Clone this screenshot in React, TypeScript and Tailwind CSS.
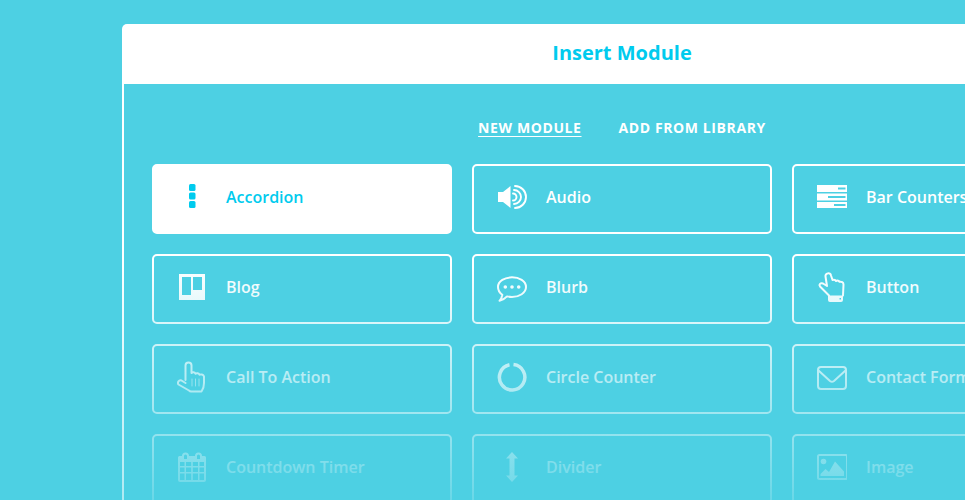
import React from 'react';

const icons: Record<string, React.ReactNode> = {
  accordion: (
    <g fill="currentColor">
      <rect x="12" y="3" width="6.5" height="7" rx="1.5" />
      <rect x="12" y="11.5" width="6.5" height="7" rx="1.5" />
      <rect x="12" y="20" width="6.5" height="7" rx="1.5" />
    </g>
  ),
  audio: (
    <g>
      <path fill="currentColor" d="M1 11h5l7.5-6v22L6 21H1z" />
      <g fill="none" stroke="currentColor" strokeWidth="1.9" strokeLinecap="round">
        <path d="M16 12.500a3.500 3.500 0 0 1 0 7" />
        <path d="M17 9a7 7 0 0 1 0 14" />
        <path d="M18 5a11 11 0 0 1 0 22" />
      </g>
    </g>
  ),
  bars: (
    <path
      fill="currentColor"
      fillRule="evenodd"
      d="M0 4h30v7H0zM21 6.500v2h7.500v-2zM0 12.500h30v7H0zM11 15v2h17.500v-2zM0 21h30v6H0zM17 23v2h11.500v-2z"
    />
  ),
  blog: (
    <path
      fill="currentColor"
      fillRule="evenodd"
      d="M2 3h26v26H2zM5 6v18h9V6zM16 6v13h9V6z"
    />
  ),
  pointer: (
    <g fill="none" stroke="currentColor" strokeWidth="2" strokeLinejoin="round" strokeLinecap="round">
      <path d="M8.500 19V4.500a3 3 0 0 1 6 0V12c1-1.200 3.500-1 4 .8 1-1 3.500-.7 4 1 1-.7 4-.5 4.500 1.700L27 22c0 2.500-1 6.500-2.500 8.500H14c-1 0-1.500-.5-2-1L1.500 23.500c-1.500-2 .5-5 3-4L8.500 22" />
      <path strokeWidth="1" opacity="0.7" d="M15 18v7M18.500 18v7M22 18v7" />
    </g>
  ),
  button: (
    <g>
      <path
        fill="none"
        stroke="currentColor"
        strokeWidth="2"
        strokeLinejoin="round"
        strokeLinecap="round"
        d="M12 24.500 3 15.500c-1.500-2 .5-4 3-3l4 2.500L8.500 5.500c-.5-3.500 5-4.500 5.500-1L15.500 9c1.500-.5 3 0 3.500 1 1.500-.8 3-.3 3.500.8 2-.5 4 .5 4 2.700L26 24.500"
      />
      <path
        fill="currentColor"
        fillRule="evenodd"
        d="M11 24.500h15V29a2 2 0 0 1-2 2H13a2 2 0 0 1-2-2zM22.500 27v1.500H24V27z"
      />
    </g>
  ),
  blurb: (
    <g>
      <path
        fill="none"
        stroke="currentColor"
        strokeWidth="2"
        strokeLinejoin="round"
        d="M15 6.300c7.200 0 14 3.800 14 9.700s-6.800 10-14 10c-1.800 0-3.500-.2-5-.6-2 2.200-4.500 3.600-7.500 4.400 1.500-1.800 2.500-3.500 2.800-6C2.800 22 1 19.200 1 16 1 10.100 7.800 6.300 15 6.300z"
      />
      <circle cx="8.300" cy="16" r="1.800" fill="currentColor" />
      <circle cx="15" cy="16" r="1.800" fill="currentColor" />
      <circle cx="21.700" cy="16" r="1.800" fill="currentColor" />
    </g>
  ),
  ring: (
    <path
      fill="none"
      stroke="currentColor"
      strokeWidth="3.500"
      d="M16.500 3.600A12.700 12.700 0 1 1 12.500 3.800"
    />
  ),
  mail: (
    <g fill="none" stroke="currentColor" strokeWidth="2" strokeLinejoin="round">
      <rect x="1" y="6" width="28" height="22" rx="3" />
      <path d="M1.500 9.500 13 20c1.200 1 2.800 1 4 0L28.500 9.500" />
    </g>
  ),
  calendar: (
    <path
      fill="currentColor"
      fillRule="evenodd"
      d="M1 6.500A1.500 1.500 0 0 1 2.500 5H5a3.500 3.500 0 0 1 7 0h6a3.500 3.500 0 0 1 7 0h2.500A1.500 1.500 0 0 1 29 6.500V29a2 2 0 0 1-2 2H3a2 2 0 0 1-2-2zM3 11v4h4.500v-4zM9 11v4h5.200v-4zM15.800 11v4H21v-4zM22.500 11v4H27v-4zM3 16.500V21h4.500v-4.500zM9 16.500V21h5.200v-4.500zM15.800 16.500V21H21v-4.500zM22.500 16.500V21H27v-4.500zM3 22.500V29h4.500v-6.500zM9 22.500V29h5.200v-6.500zM15.800 22.500V29H21v-6.500zM22.500 22.500V29H27v-6.500zM7 5v3h3V5a1.500 1.500 0 0 0-3 0zM20 5v3h3V5a1.500 1.500 0 0 0-3 0z"
    />
  ),
  divider: <path fill="currentColor" d="M15 1l6 6.500h-3.500v17H21L15 31l-6-6.500h3.500v-17H9z" />,
  image: (
    <g>
      <rect x="1" y="4" width="29" height="24" rx="1.500" fill="none" stroke="currentColor" strokeWidth="2" />
      <circle cx="6.500" cy="10.500" r="2.800" fill="currentColor" />
      <path fill="currentColor" d="M3.500 25v-2l5-5 3.500 3 6-10.500 9 10V25z" />
    </g>
  ),
};

const modules = [
  { name: 'Accordion', icon: 'accordion', active: true },
  { name: 'Audio', icon: 'audio' },
  { name: 'Bar Counters', icon: 'bars' },
  { name: 'Blog', icon: 'blog' },
  { name: 'Blurb', icon: 'blurb' },
  { name: 'Button', icon: 'button' },
  { name: 'Call To Action', icon: 'pointer' },
  { name: 'Circle Counter', icon: 'ring' },
  { name: 'Contact Form', icon: 'mail' },
  { name: 'Countdown Timer', icon: 'calendar' },
  { name: 'Divider', icon: 'divider' },
  { name: 'Image', icon: 'image' },
];

const ModuleCard: React.FC<{ name: string; icon: string; active?: boolean }> = ({ name, icon, active }) => {
  return (
    <div
      className={`flex items-center gap-[19px] h-[70px] pl-[23px] pb-[4px] rounded-[5px] border-2 border-white text-[16px] font-semibold whitespace-nowrap ${
        active ? 'bg-white text-[#00cbee]' : 'text-white'
      }`}
    >
      <svg width="30" height="32" viewBox="0 0 30 32" className="shrink-0">
        {icons[icon]}
      </svg>
      <span>{name}</span>
    </div>
  );
};

export default function App() {
  return (
    <div className="relative w-[965px] h-[500px] overflow-hidden bg-[#4dd0e3] pt-[24px] pl-[122px] font-['Open_Sans',sans-serif]">
      <div className="w-[1000px]">
        <div className="h-[60px] pb-[2px] flex items-center justify-center bg-white rounded-tl-[5px] text-[20px] font-bold text-[#00cbee]">
          Insert Module
        </div>
        <div className="border-l-2 border-white px-[28px] pt-[34px] h-[500px]">
          <div className="flex justify-center gap-[37px] mr-[2px] mb-[26px] text-[14px] leading-[20px] font-bold tracking-[0.6px] uppercase text-white">
            <span className="underline underline-offset-[3px]">New Module</span>
            <span>Add From Library</span>
          </div>
          <div className="grid grid-cols-[300px_300px_300px] gap-[20px]">
            {modules.map((m) => (
              <ModuleCard key={m.name} name={m.name} icon={m.icon} active={m.active} />
            ))}
          </div>
        </div>
      </div>
      {/* fade over the lower rows, weaker on the modal's left edge */}
      <div className="absolute left-[124px] right-0 top-[265px] h-[235px] pointer-events-none bg-gradient-to-b from-[#4dd0e3]/0 to-[#4dd0e3]/[0.84]" />
      <div className="absolute left-[122px] w-[2px] top-[265px] h-[235px] pointer-events-none bg-gradient-to-b from-[#4dd0e3]/0 to-[#4dd0e3]/[0.45]" />
    </div>
  );
}
